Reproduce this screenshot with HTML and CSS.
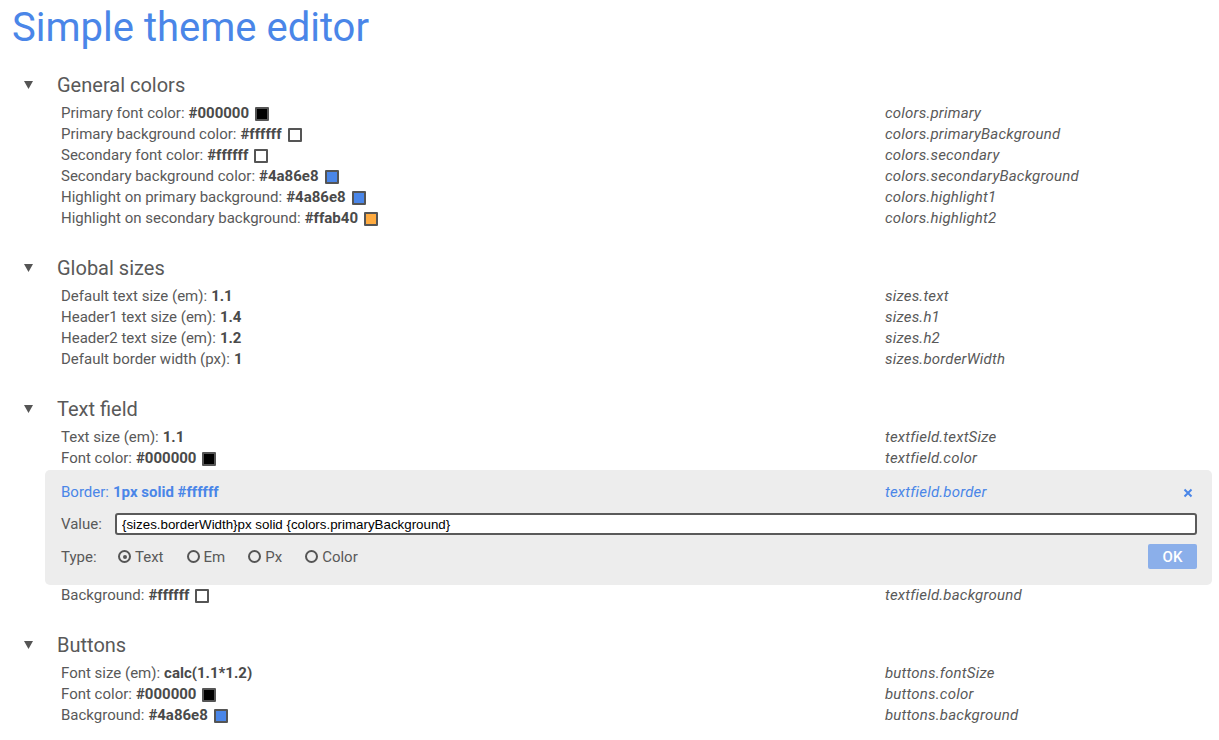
FILE: index.html
```html
<!DOCTYPE html>
<html>
<head>
<meta charset="utf-8">
<link rel="stylesheet" href="styles.css">
</head>
<body>
<div class="page">
  <h1 class="title">Simple theme editor</h1>

  <section class="section">
    <div class="sec-head">
      <svg class="caret" width="9" height="8" viewBox="0 0 9 8"><polygon points="0,0 9,0 4.5,8" fill="#555"/></svg>
      <h2 class="sec-title">General colors</h2>
    </div>
    <div class="sec-body">
      <div class="row"><div class="label">Primary font color: <b class="val">#000000</b><span class="sw" style="background:#000000"></span></div><div class="path">colors.primary</div></div>
      <div class="row"><div class="label">Primary background color: <b class="val">#ffffff</b><span class="sw" style="background:#ffffff"></span></div><div class="path">colors.primaryBackground</div></div>
      <div class="row"><div class="label">Secondary font color: <b class="val">#ffffff</b><span class="sw" style="background:#ffffff"></span></div><div class="path">colors.secondary</div></div>
      <div class="row"><div class="label">Secondary background color: <b class="val">#4a86e8</b><span class="sw" style="background:#4a86e8"></span></div><div class="path">colors.secondaryBackground</div></div>
      <div class="row"><div class="label">Highlight on primary background: <b class="val">#4a86e8</b><span class="sw" style="background:#4a86e8"></span></div><div class="path">colors.highlight1</div></div>
      <div class="row"><div class="label">Highlight on secondary background: <b class="val">#ffab40</b><span class="sw" style="background:#ffab40"></span></div><div class="path">colors.highlight2</div></div>
    </div>
  </section>

  <section class="section">
    <div class="sec-head">
      <svg class="caret" width="9" height="8" viewBox="0 0 9 8"><polygon points="0,0 9,0 4.5,8" fill="#555"/></svg>
      <h2 class="sec-title">Global sizes</h2>
    </div>
    <div class="sec-body">
      <div class="row"><div class="label">Default text size (em): <b class="val">1.1</b></div><div class="path">sizes.text</div></div>
      <div class="row"><div class="label">Header1 text size (em): <b class="val">1.4</b></div><div class="path">sizes.h1</div></div>
      <div class="row"><div class="label">Header2 text size (em): <b class="val">1.2</b></div><div class="path">sizes.h2</div></div>
      <div class="row"><div class="label">Default border width (px): <b class="val">1</b></div><div class="path">sizes.borderWidth</div></div>
    </div>
  </section>

  <section class="section">
    <div class="sec-head">
      <svg class="caret" width="9" height="8" viewBox="0 0 9 8"><polygon points="0,0 9,0 4.5,8" fill="#555"/></svg>
      <h2 class="sec-title">Text field</h2>
    </div>
    <div class="sec-body">
      <div class="row"><div class="label">Text size (em): <b class="val">1.1</b></div><div class="path">textfield.textSize</div></div>
      <div class="row"><div class="label">Font color: <b class="val">#000000</b><span class="sw" style="background:#000000"></span></div><div class="path">textfield.color</div></div>
      <div class="editor">
        <div class="row row-edit">
          <div class="label">Border: <b class="val">1px solid #ffffff</b></div>
          <div class="path">textfield.border</div>
          <svg class="close" width="10" height="10" viewBox="0 0 10 10"><path d="M1.5 1.5 L8.5 8.5 M8.5 1.5 L1.5 8.5" stroke="#4a86e8" stroke-width="2" fill="none"/></svg>
        </div>
        <div class="field-row">
          <span class="flabel">Value:</span>
          <input class="input" type="text" value="{sizes.borderWidth}px solid {colors.primaryBackground}">
        </div>
        <div class="type-row">
          <span class="flabel">Type:</span>
          <div class="radios">
            <span class="radio"><span class="circle on"></span>Text</span>
            <span class="radio"><span class="circle"></span>Em</span>
            <span class="radio"><span class="circle"></span>Px</span>
            <span class="radio"><span class="circle"></span>Color</span>
          </div>
          <button class="ok">OK</button>
        </div>
      </div>
      <div class="row"><div class="label">Background: <b class="val">#ffffff</b><span class="sw" style="background:#ffffff"></span></div><div class="path">textfield.background</div></div>
    </div>
  </section>

  <section class="section">
    <div class="sec-head">
      <svg class="caret" width="9" height="8" viewBox="0 0 9 8"><polygon points="0,0 9,0 4.5,8" fill="#555"/></svg>
      <h2 class="sec-title">Buttons</h2>
    </div>
    <div class="sec-body">
      <div class="row"><div class="label">Font size (em): <b class="val">calc(1.1*1.2)</b></div><div class="path">buttons.fontSize</div></div>
      <div class="row"><div class="label">Font color: <b class="val">#000000</b><span class="sw" style="background:#000000"></span></div><div class="path">buttons.color</div></div>
      <div class="row"><div class="label">Background: <b class="val">#4a86e8</b><span class="sw" style="background:#4a86e8"></span></div><div class="path">buttons.background</div></div>
    </div>
  </section>
</div>
</body>
</html>
```

FILE: styles.css
```css
html, body {
  margin: 0;
  padding: 0;
  background: #ffffff;
}

body {
  font-family: Roboto, "Liberation Sans", sans-serif;
  color: #595959;
  font-size: 15px;
}

.page {
  padding: 0 7px 0 10px;
}

.title {
  margin: 4px 0 0 2px;
  font-size: 40px;
  line-height: 48px;
  font-weight: 400;
  color: #4a86e8;
}

.section {
  margin-top: 19px;
}

.section + .section {
  margin-top: 25px;
}

.sec-head {
  display: flex;
  align-items: center;
  height: 28px;
}

.caret {
  margin-left: 14px;
  margin-top: -1px;
  flex: none;
}

.sec-title {
  margin: 0 0 0 24px;
  font-size: 20px;
  line-height: 28px;
  font-weight: 400;
  color: #595959;
}

.sec-body {
  margin-top: 4px;
  margin-left: 35px;
}

.row {
  display: grid;
  grid-template-columns: 824px 1fr;
  align-items: center;
  height: 21px;
  line-height: 21px;
  padding: 0 16px;
  white-space: nowrap;
}

.label {
  display: flex;
  align-items: center;
}

.val {
  font-weight: 700;
  color: #4a4a4a;
  margin-left: 4px;
}

.sw {
  display: inline-block;
  width: 10px;
  height: 10px;
  border: 2px solid #555;
  border-radius: 1px;
  margin-left: 6px;
}

.path {
  font-style: italic;
  color: #595959;
  letter-spacing: 0.2px;
}

.editor {
  margin-top: 1px;
  background: #ededed;
  border-radius: 5px;
  padding: 12px 0 16px 0;
}

.row-edit {
  grid-template-columns: 824px 1fr auto;
}

.row-edit .label,
.row-edit .val,
.row-edit .path {
  color: #4a86e8;
}

.close {
  display: block;
  margin-right: 3px;
}

.field-row {
  display: flex;
  align-items: center;
  margin-top: 10px;
  padding: 0 15px 0 16px;
}

.flabel {
  width: 54px;
  flex: none;
  color: #595959;
}

.input {
  flex: 1;
  height: 22px;
  box-sizing: border-box;
  border: 2px solid #5a5a5a;
  border-radius: 3px;
  padding: 0 5px;
  margin: 0;
  font-family: "Liberation Sans", Arial, sans-serif;
  font-size: 13.33px;
  color: #000;
  background: #fff;
  outline: none;
}

.type-row {
  display: flex;
  align-items: center;
  margin-top: 9px;
  padding: 0 15px 0 16px;
  height: 25px;
}

.radios {
  display: flex;
  align-items: center;
  flex: 1;
  padding-left: 3px;
}

.radio {
  display: inline-flex;
  align-items: center;
  margin-right: 23px;
  color: #595959;
}

.circle {
  box-sizing: border-box;
  width: 13px;
  height: 13px;
  border: 2px solid #555;
  border-radius: 50%;
  margin-right: 4px;
  position: relative;
  background: transparent;
}

.circle.on::after {
  content: "";
  position: absolute;
  left: 2.5px;
  top: 2.5px;
  width: 4px;
  height: 4px;
  border-radius: 50%;
  background: #555;
}

.ok {
  width: 49px;
  height: 25px;
  border: none;
  border-radius: 2px;
  background: #8bafea;
  color: #ffffff;
  font-family: Roboto, "Liberation Sans", sans-serif;
  font-size: 15px;
  font-weight: 500;
  padding: 0;
}
```
